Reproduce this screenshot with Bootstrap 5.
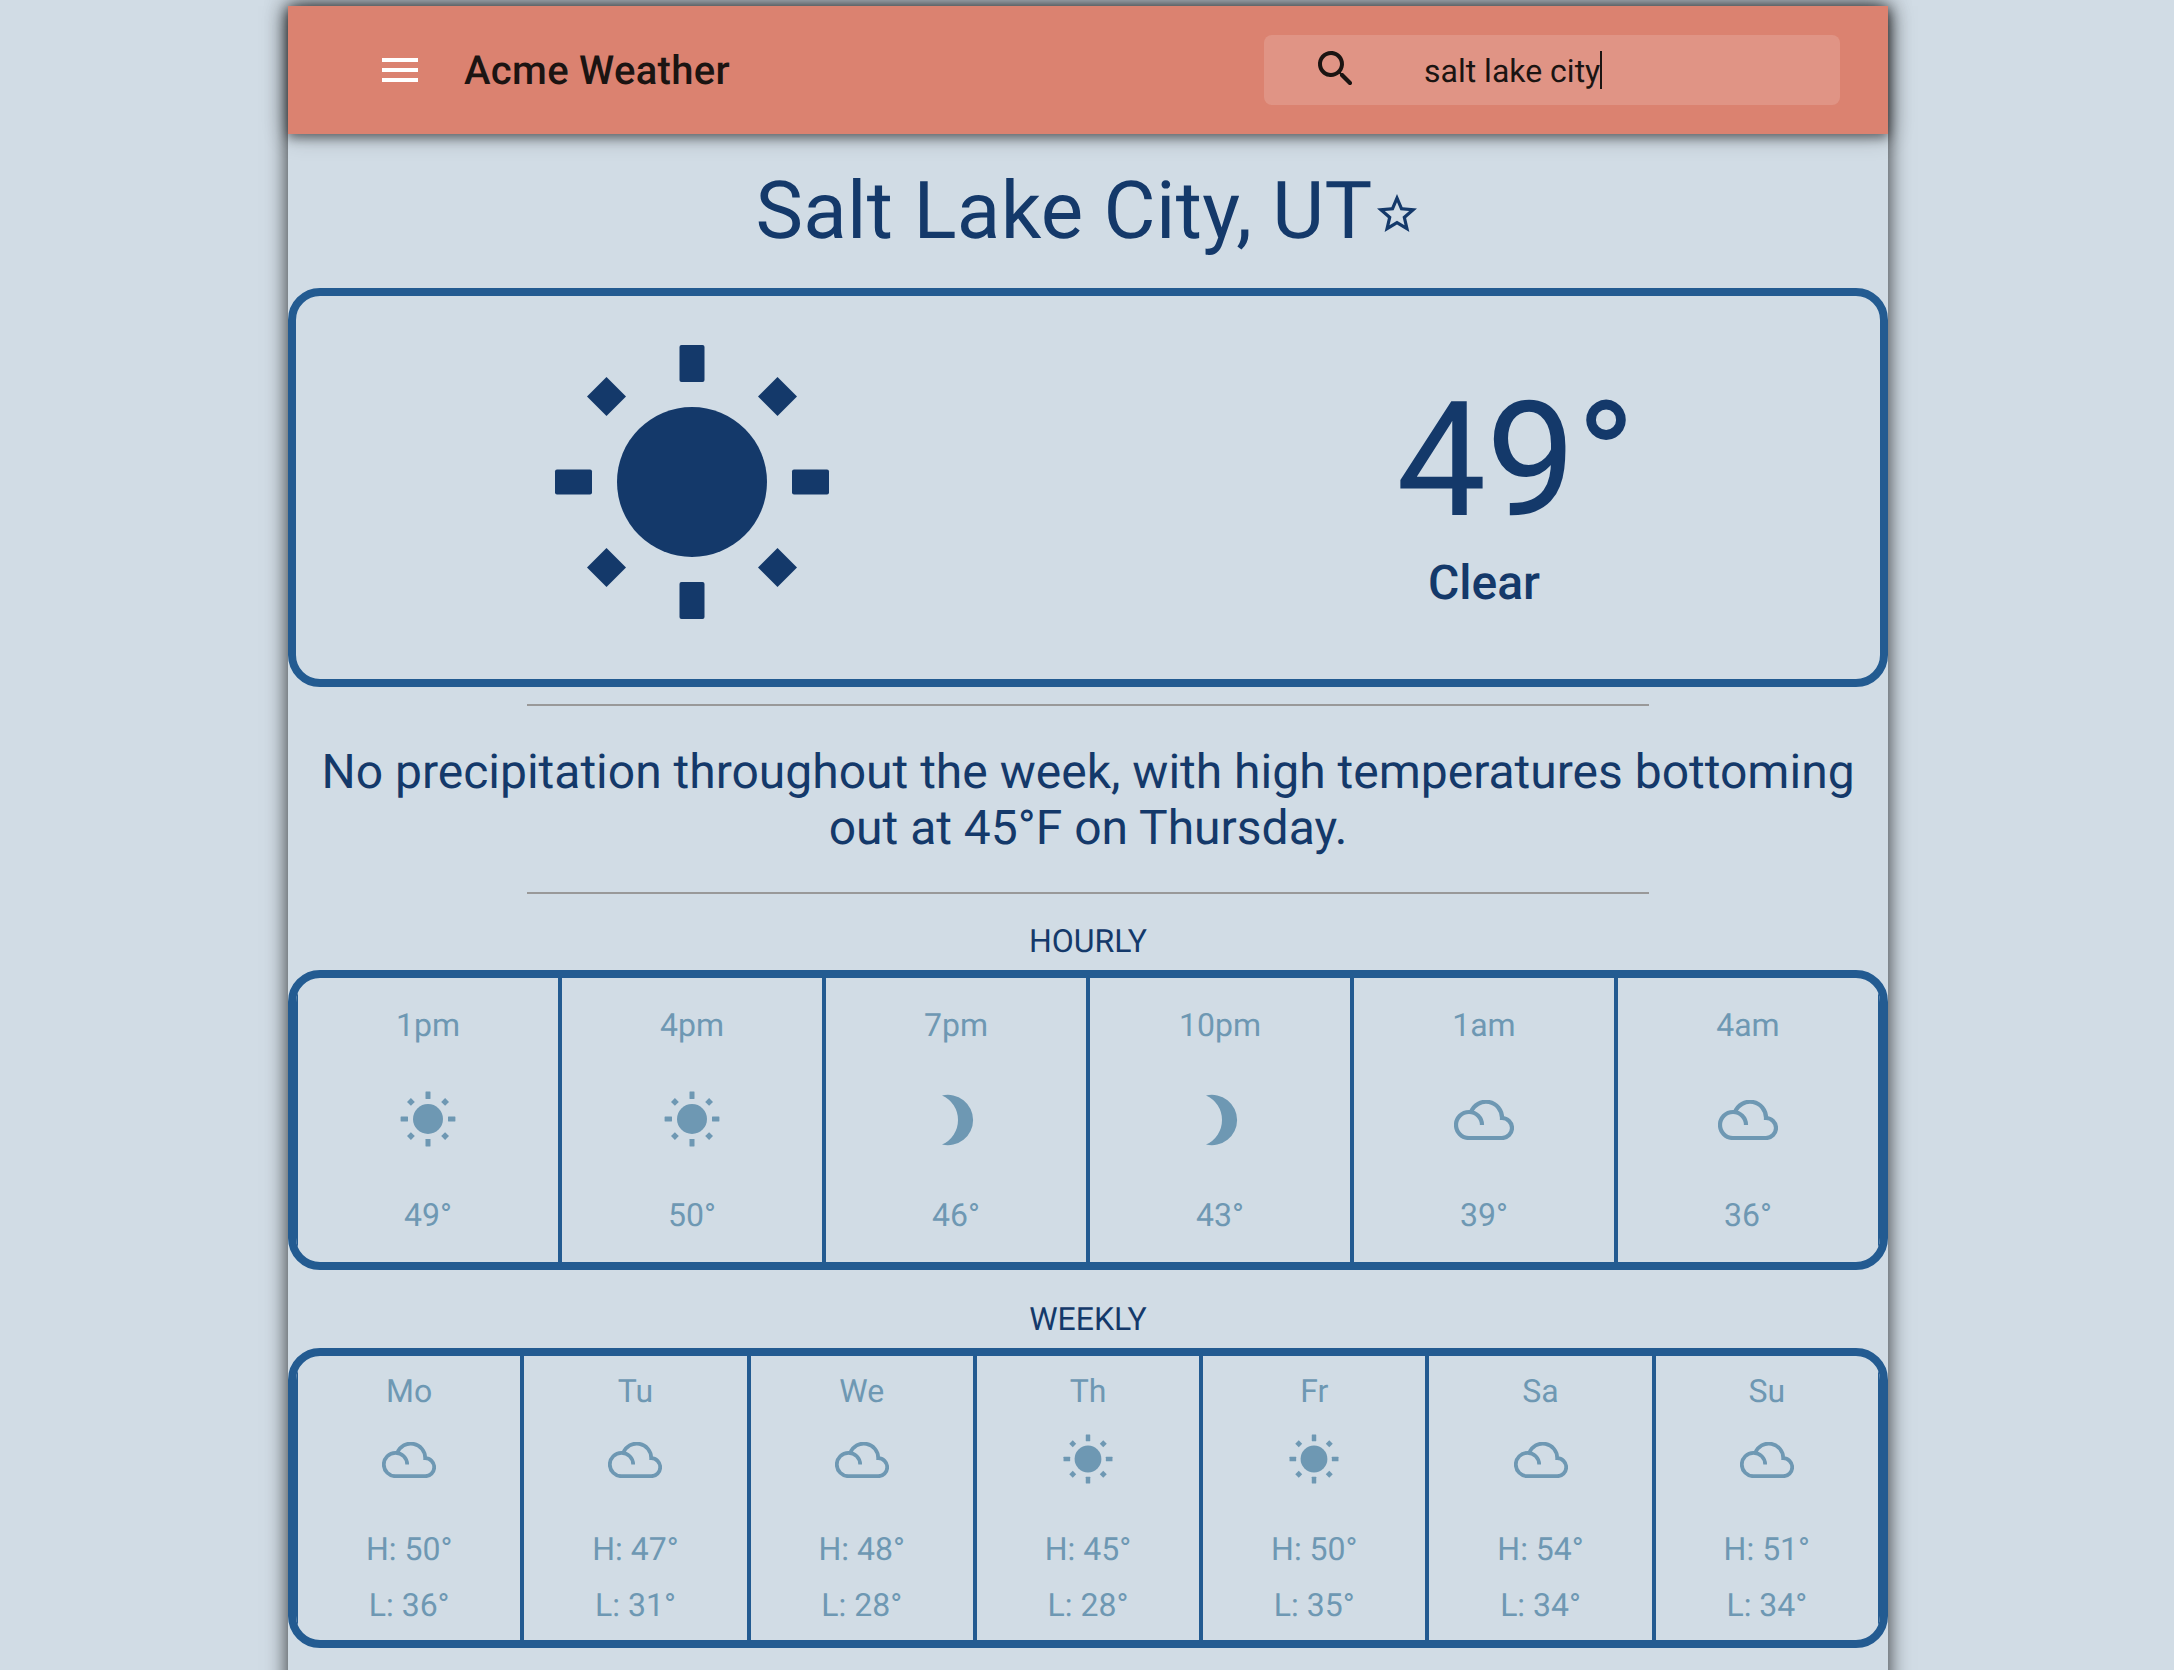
<!doctype html>
<html lang="en"><head><meta charset="utf-8"><title>Acme Weather</title>
<link href="https://cdn.jsdelivr.net/npm/bootstrap@5.3.0/dist/css/bootstrap.min.css" rel="stylesheet">
<style>
body{background:#d1dce5;font-family:Roboto,"Liberation Sans",sans-serif;color:#14396a;text-rendering:geometricPrecision}
.app-shell{width:1600px;margin:6px 0 0 288px;box-shadow:0 0 20px rgba(0,0,0,.8);min-height:1700px;background:#d1dce5}
.app-head{height:128px;background:#db8270;box-shadow:0 4px 10px rgba(0,0,0,.45),0 0 24px rgba(0,0,0,.3);padding:0 48px 0 94px;color:#1b1412;position:relative}
.app-name{font-size:40px;font-weight:500;margin-left:46px;line-height:1;padding-top:2px;letter-spacing:.0075em}
.burger{width:36px;height:24px;border-top:4px solid #fff;border-bottom:4px solid #fff;position:relative}
.burger::before{content:"";position:absolute;left:0;right:0;top:6px;height:4px;background:#fff}
.search-box{width:576px;height:70px;background:rgba(255,255,255,.15);border-radius:8px;font-size:32px;padding-left:48px}
.search-ic{margin-bottom:2px}
.search-text{margin-left:64px;padding-top:2px}
.caret-bar{display:inline-block;width:2px;height:38px;background:#1b1412}
.city-title{font-size:80px;font-weight:400;line-height:1;margin:0;padding-top:37px;letter-spacing:.3px}
.star-ic{vertical-align:0}
.panel-box{border:8px solid #235b91;border-radius:32px}
.now-box{height:399px;margin-top:37px}
.sun-wrap{padding-bottom:12px}
.temp-col{padding-top:13px}
.temp-big{font-size:160px;line-height:1;font-weight:400;padding-left:64px}
.cond{font-size:48px;font-weight:500;line-height:1;margin-top:17px}
.rule-line{width:1122px;margin:0 auto;border-top:2px solid #999;opacity:1}
.rule-first{margin-top:17px}
.summary{font-size:48px;line-height:56px;padding:0 30px;margin:38px 0 36px}
.sec-title{font-size:32px;line-height:1;margin-top:31px;margin-bottom:13px}
.sec-week{margin-top:33px;margin-bottom:13px}
.hourly-box{height:300px}
.weekly-box{height:300px}
.slot{border-left:2px solid #235b91;border-right:2px solid #235b91;color:#6e98b3;font-size:32px}
.hour-slot{flex:0 0 calc(100%/6);padding:23px 0}
.day-slot{flex:0 0 calc(100%/7);padding:11px 0}
.day-icon{height:72px;margin:9px 0 29px}
.low-line{margin-top:8px}
.ic-hour{width:56px;height:56px}.ic-hour-sun{width:56px;height:56px;margin-bottom:3px}.ic-hour-cloud{width:60px;height:40px}.ic-week-cloud{width:54px;height:36px}.ic-week-sun{width:50px;height:50px;margin-bottom:3px}
</style></head>
<body class="vh-100 overflow-hidden">
<svg width="0" height="0" class="position-absolute"><defs>
<symbol id="sun2" viewBox="-140 -140 280 280"><g fill="currentColor"><circle r="75"/><rect x="-12.5" y="-137" width="25" height="37" rx="2"/><rect x="-12.5" y="100" width="25" height="37" rx="2"/><rect x="-137" y="-12.5" width="37" height="25" rx="2"/><rect x="100" y="-12.5" width="37" height="25" rx="2"/><path d="M-85.5-105-66-85.5-85.5-66-105-85.5Z"/><path d="M85.5-105 105-85.5 85.5-66 66-85.5Z"/><path d="M-85.5 66-66 85.5-85.5 105-105 85.5Z"/><path d="M85.5 66 105 85.5 85.5 105 66 85.5Z"/></g></symbol>
<symbol id="cloud" viewBox="0 0 60 40"><path d="M15 38A13 13 0 1 1 28 25M17 12.2A16 16 0 0 1 48 18A10 10 0 0 1 48 38H15" fill="none" stroke="currentColor" stroke-width="4.2"/></symbol>
<symbol id="moon" viewBox="0 0 56 56"><path d="M14 3.5A25.2 25.2 0 1 1 14 52.5A26.75 26.75 0 0 0 14 3.5Z" fill="currentColor"/></symbol>
</defs></svg>
<div class="app-shell">
<header class="app-head d-flex align-items-center">
<div class="burger"></div><div class="app-name">Acme Weather</div>
<div class="search-box ms-auto d-flex align-items-center">
<svg class="search-ic" width="48" height="48" viewBox="0 0 24 24" fill="#1b1412"><path d="M15.5 14h-.79l-.28-.27c1.2-1.4 1.82-3.31 1.48-5.34-.47-2.78-2.79-5-5.59-5.34-4.23-.52-7.79 3.04-7.27 7.27.34 2.8 2.56 5.12 5.34 5.59 2.03.34 3.94-.28 5.34-1.48l.27.28v.79l4.25 4.25c.41.41 1.08.41 1.49 0 .41-.41.41-1.08 0-1.49L15.5 14zm-6 0C7.01 14 5 11.99 5 9.5S7.01 5 9.5 5 14 7.01 14 9.5 11.99 14 9.5 14z"/></svg>
<span class="search-text">salt lake city</span><span class="caret-bar"></span>
</div></header>
<h1 class="city-title text-center">Salt Lake City, UT<svg class="star-ic" width="48" height="48" viewBox="0 0 24 24" fill="#14396a"><path d="M22 9.24l-7.19-.62L12 2 9.19 8.63 2 9.24l5.46 4.73L5.82 21 12 17.27 18.18 21l-1.63-7.03L22 9.24zM12 15.4l-3.76 2.27 1-4.28-3.32-2.88 4.38-.38L12 6.1l1.71 4.04 4.38.38-3.32 2.88 1 4.28L12 15.4z"/></svg></h1>
<section class="panel-box now-box d-flex">
<div class="w-50 sun-wrap d-flex align-items-center justify-content-center"><svg width="280" height="280"><use href="#sun2"/></svg></div>
<div class="w-50 temp-col d-flex flex-column align-items-center justify-content-center"><div class="temp-big">49°</div><div class="cond">Clear</div></div>
</section>
<hr class="rule-line rule-first mb-0">
<p class="summary text-center">No precipitation throughout the week, with high temperatures bottoming out at 45°F on Thursday.</p>
<hr class="rule-line my-0">
<div class="sec-title text-center">HOURLY</div>
<section class="panel-box hourly-box d-flex overflow-hidden">
<div class="slot hour-slot d-flex flex-column align-items-center justify-content-between"><div>1pm</div><svg class="ic-hour-sun"><use href="#sun2"/></svg><div>49°</div></div>
<div class="slot hour-slot d-flex flex-column align-items-center justify-content-between"><div>4pm</div><svg class="ic-hour-sun"><use href="#sun2"/></svg><div>50°</div></div>
<div class="slot hour-slot d-flex flex-column align-items-center justify-content-between"><div>7pm</div><svg class="ic-hour"><use href="#moon"/></svg><div>46°</div></div>
<div class="slot hour-slot d-flex flex-column align-items-center justify-content-between"><div>10pm</div><svg class="ic-hour"><use href="#moon"/></svg><div>43°</div></div>
<div class="slot hour-slot d-flex flex-column align-items-center justify-content-between"><div>1am</div><svg class="ic-hour-cloud"><use href="#cloud"/></svg><div>39°</div></div>
<div class="slot hour-slot d-flex flex-column align-items-center justify-content-between"><div>4am</div><svg class="ic-hour-cloud"><use href="#cloud"/></svg><div>36°</div></div>
</section>
<div class="sec-title sec-week text-center">WEEKLY</div>
<section class="panel-box weekly-box d-flex overflow-hidden">
<div class="slot day-slot d-flex flex-column align-items-center"><div>Mo</div><div class="day-icon d-flex align-items-center"><svg class="ic-week-cloud"><use href="#cloud"/></svg></div><div>H: 50°</div><div class="low-line">L: 36°</div></div>
<div class="slot day-slot d-flex flex-column align-items-center"><div>Tu</div><div class="day-icon d-flex align-items-center"><svg class="ic-week-cloud"><use href="#cloud"/></svg></div><div>H: 47°</div><div class="low-line">L: 31°</div></div>
<div class="slot day-slot d-flex flex-column align-items-center"><div>We</div><div class="day-icon d-flex align-items-center"><svg class="ic-week-cloud"><use href="#cloud"/></svg></div><div>H: 48°</div><div class="low-line">L: 28°</div></div>
<div class="slot day-slot d-flex flex-column align-items-center"><div>Th</div><div class="day-icon d-flex align-items-center"><svg class="ic-week-sun"><use href="#sun2"/></svg></div><div>H: 45°</div><div class="low-line">L: 28°</div></div>
<div class="slot day-slot d-flex flex-column align-items-center"><div>Fr</div><div class="day-icon d-flex align-items-center"><svg class="ic-week-sun"><use href="#sun2"/></svg></div><div>H: 50°</div><div class="low-line">L: 35°</div></div>
<div class="slot day-slot d-flex flex-column align-items-center"><div>Sa</div><div class="day-icon d-flex align-items-center"><svg class="ic-week-cloud"><use href="#cloud"/></svg></div><div>H: 54°</div><div class="low-line">L: 34°</div></div>
<div class="slot day-slot d-flex flex-column align-items-center"><div>Su</div><div class="day-icon d-flex align-items-center"><svg class="ic-week-cloud"><use href="#cloud"/></svg></div><div>H: 51°</div><div class="low-line">L: 34°</div></div>
</section>
</div>
<script src="https://cdn.jsdelivr.net/npm/bootstrap@5.3.0/dist/js/bootstrap.bundle.min.js"></script>
</body></html>
